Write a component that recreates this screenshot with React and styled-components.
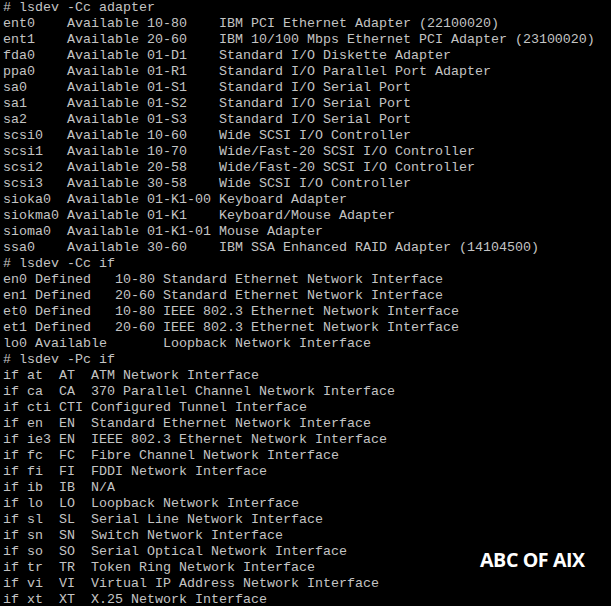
import React from "react";
import styled, { createGlobalStyle } from "styled-components";

const GlobalStyle = createGlobalStyle`
  html, body {
    margin: 0;
    padding: 0;
    background: #000;
  }
  body {
    width: 611px;
    height: 606px;
    overflow: hidden;
  }
`;

const Screen = styled.div`
  position: relative;
  width: 611px;
  height: 606px;
  background: #000;
  overflow: hidden;
`;

const Output = styled.div`
  padding-left: 3px;
  font-family: "Liberation Mono", "Courier New", monospace;
  font-size: 13.333px;
  line-height: 16px;
  color: #c4c4c4;
`;

const Block = styled.section`
  display: flex;
  flex-direction: column;
`;

const Line = styled.div`
  white-space: pre;
  height: 16px;
`;

const Watermark = styled.div`
  position: absolute;
  left: 480px;
  top: 548px;
  font-family: "Open Sans", "Noto Sans", sans-serif;
  font-weight: 700;
  font-size: 19.6px;
  letter-spacing: -0.4px;
  line-height: 24px;
  color: #fff;
  white-space: nowrap;
`;

const blocks = [
  {
    cmd: "# lsdev -Cc adapter",
    rows: [
      "ent0    Available 10-80    IBM PCI Ethernet Adapter (22100020)",
      "ent1    Available 20-60    IBM 10/100 Mbps Ethernet PCI Adapter (23100020)",
      "fda0    Available 01-D1    Standard I/O Diskette Adapter",
      "ppa0    Available 01-R1    Standard I/O Parallel Port Adapter",
      "sa0     Available 01-S1    Standard I/O Serial Port",
      "sa1     Available 01-S2    Standard I/O Serial Port",
      "sa2     Available 01-S3    Standard I/O Serial Port",
      "scsi0   Available 10-60    Wide SCSI I/O Controller",
      "scsi1   Available 10-70    Wide/Fast-20 SCSI I/O Controller",
      "scsi2   Available 20-58    Wide/Fast-20 SCSI I/O Controller",
      "scsi3   Available 30-58    Wide SCSI I/O Controller",
      "sioka0  Available 01-K1-00 Keyboard Adapter",
      "siokma0 Available 01-K1    Keyboard/Mouse Adapter",
      "sioma0  Available 01-K1-01 Mouse Adapter",
      "ssa0    Available 30-60    IBM SSA Enhanced RAID Adapter (14104500)",
    ],
  },
  {
    cmd: "# lsdev -Cc if",
    rows: [
      "en0 Defined   10-80 Standard Ethernet Network Interface",
      "en1 Defined   20-60 Standard Ethernet Network Interface",
      "et0 Defined   10-80 IEEE 802.3 Ethernet Network Interface",
      "et1 Defined   20-60 IEEE 802.3 Ethernet Network Interface",
      "lo0 Available       Loopback Network Interface",
    ],
  },
  {
    cmd: "# lsdev -Pc if",
    rows: [
      "if at  AT  ATM Network Interface",
      "if ca  CA  370 Parallel Channel Network Interface",
      "if cti CTI Configured Tunnel Interface",
      "if en  EN  Standard Ethernet Network Interface",
      "if ie3 EN  IEEE 802.3 Ethernet Network Interface",
      "if fc  FC  Fibre Channel Network Interface",
      "if fi  FI  FDDI Network Interface",
      "if ib  IB  N/A",
      "if lo  LO  Loopback Network Interface",
      "if sl  SL  Serial Line Network Interface",
      "if sn  SN  Switch Network Interface",
      "if so  SO  Serial Optical Network Interface",
      "if tr  TR  Token Ring Network Interface",
      "if vi  VI  Virtual IP Address Network Interface",
      "if xt  XT  X.25 Network Interface",
    ],
  },
];

export default function App() {
  return (
    <>
      <GlobalStyle />
      <Screen>
        <Output>
          {blocks.map((b) => (
            <Block key={b.cmd}>
              <Line>{b.cmd}</Line>
              {b.rows.map((r) => (
                <Line key={r}>{r}</Line>
              ))}
            </Block>
          ))}
        </Output>
        <Watermark>ABC OF AIX</Watermark>
      </Screen>
    </>
  );
}
